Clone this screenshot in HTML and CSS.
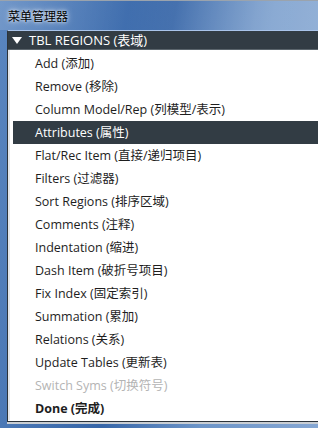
FILE: index.html
```html
<!DOCTYPE html>
<html>
<head>
<meta charset="utf-8">
<link rel="stylesheet" href="styles.css">
</head>
<body>
<div class="window">
  <div class="titlebar">菜单管理器</div>
  <div class="panel">
    <div class="header"><span class="tri"></span>TBL REGIONS (表域)</div>
    <ul class="list">
      <li>Add (添加)</li>
      <li>Remove (移除)</li>
      <li>Column Model/Rep (列模型/表示)</li>
      <li class="sel">Attributes (属性)</li>
      <li>Flat/Rec Item (直接/递归项目)</li>
      <li>Filters (过滤器)</li>
      <li>Sort Regions (排序区域)</li>
      <li>Comments (注释)</li>
      <li>Indentation (缩进)</li>
      <li>Dash Item (破折号项目)</li>
      <li>Fix Index (固定索引)</li>
      <li>Summation (累加)</li>
      <li>Relations (关系)</li>
      <li>Update Tables (更新表)</li>
      <li class="dis">Switch Syms (切换符号)</li>
      <li class="bold">Done (完成)</li>
    </ul>
  </div>
</div>
</body>
</html>
```

FILE: styles.css
```css
html, body {
  margin: 0;
  padding: 0;
  width: 318px;
  height: 428px;
  overflow: hidden;
}
body {
  font-family: "Open Sans", "Noto Sans CJK SC", sans-serif;
  background: linear-gradient(100deg, #5a86c0 0%, #3766a8 45%, #6d95c8 70%, #86a7d3 100%);
}
.window {
  display: flex;
  flex-direction: column;
  height: 428px;
}
.titlebar {
  height: 30px;
  box-sizing: border-box;
  padding: 6px 0 0 8px;
  font-family: "Noto Sans CJK SC", sans-serif;
  font-size: 12px;
  line-height: 18px;
  color: #000;
  text-shadow: 0 0 6px rgba(255,255,255,0.9), 0 0 3px rgba(255,255,255,0.8);
  border-top: 1px solid #9aa3ad;
  background: linear-gradient(100deg, rgba(255,255,255,0.15), rgba(255,255,255,0) 40%, rgba(255,255,255,0.2) 80%);
}
.panel {
  margin-left: 7px;
  height: 392px;
  box-sizing: border-box;
  background: #fff;
  border-top: 1px solid #a9c4ea;
  border-left: 1px solid #2c333a;
  border-bottom: 1px solid #2c333a;
  display: flex;
  flex-direction: column;
  box-shadow: 0 2px 0 #c9ced4;
}
.header {
  height: 18px;
  background: #323c44;
  color: #fff;
  font-size: 13px;
  line-height: 18px;
  padding-left: 3px;
  display: flex;
  align-items: center;
  border-bottom: 1px solid #5b656c;
}
.tri {
  width: 0;
  height: 0;
  border-left: 5px solid transparent;
  border-right: 5px solid transparent;
  border-top: 7px solid #fff;
  margin: 0 7px 0 1px;
}
.list {
  list-style: none;
  margin: 0;
  padding: 2px 0 0 3px;
  border-left: 2px solid #e4e6e9;
}
.list li {
  height: 23px;
  line-height: 23px;
  padding-left: 22px;
  font-size: 12.5px;
  color: #1e1e1e;
  white-space: nowrap;
}
.list li.sel {
  background: #323c44;
  color: #fff;
}
.list li.dis {
  color: #b4b4b4;
}
.list li.bold {
  font-weight: bold;
}
```
